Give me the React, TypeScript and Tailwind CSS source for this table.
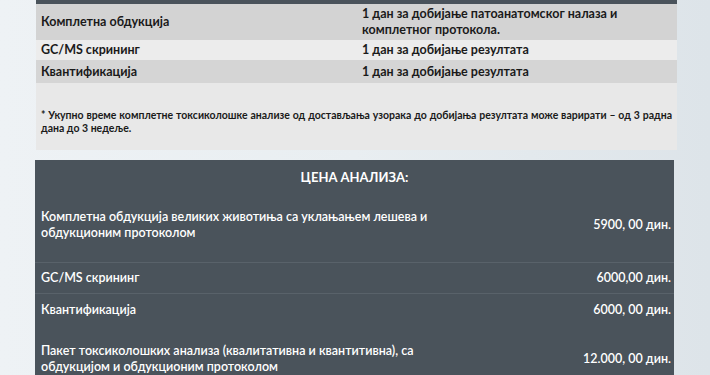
const timeRows = [
  {
    name: 'Комплетна обдукција',
    time: ['1 дан за добијање патоанатомског налаза и', 'комплетног протокола.'],
    bg: 'bg-[#d3d3d3]',
    h: 'h-[36px]',
  },
  { name: 'GC/MS скрининг', time: ['1 дан за добијање резултата'], bg: 'bg-[#ececec]', h: 'h-[20px]' },
  { name: 'Квантификација', time: ['1 дан за добијање резултата'], bg: 'bg-[#d5d5d5]', h: 'h-[23px]' },
];

const prices = [
  {
    lines: ['Комплетна обдукција великих животиња са уклањањем лешева и', 'обдукционим протоколом'],
    price: '5900, 00 дин.',
    h: 'h-[66px] pb-[8px]',
  },
  { lines: ['GC/MS скрининг'], price: '6000,00 дин.', h: 'h-[31px]' },
  { lines: ['Квантификација'], price: '6000, 00 дин.', h: 'h-[32px]' },
  {
    lines: ['Пакет токсиколошких анализа (квалитативна и квантитивна), са', 'обдукцијом и обдукционим протоколом'],
    price: '12.000, 00 дин.',
    h: 'h-[68px]',
  },
];

export default function App() {
  return (
    <div className="h-[375px] w-[710px] overflow-hidden bg-gradient-to-r from-[#eef2f5] via-[#e9eef1] to-[#dde4e9] font-['Lato','Open_Sans',sans-serif]">
      <div className="ml-[36px] w-[641px]">
        <div className="h-[4px] bg-[#4a535b]" />
        {timeRows.map((r) => (
          <div key={r.name} className={`flex items-center ${r.bg} ${r.h} text-[12.5px] font-bold leading-[16px] text-[#1a1a1a]`}>
            <div className="w-[326px] pl-[5px]">{r.name}</div>
            <div className="flex-1">
              {r.time.map((t) => (
                <div key={t}>{t}</div>
              ))}
            </div>
          </div>
        ))}
        <div className="h-[67px] bg-[#e8e8e8] px-[5px] pt-[26px] text-[10.5px] font-bold leading-[13px] text-[#1a1a1a]">
          <p className="text-justify [text-align-last:justify]">
            * Укупно време комплетне токсиколошке анализе од достављања узорака до добијања резултата може варирати – од 3 радна
          </p>
          <p>дана до 3 недеље.</p>
        </div>
      </div>

      <div className="ml-[35px] mt-[10px] w-[639px] bg-[#4a535b] text-white">
        <div className="flex h-[36px] items-center justify-center text-[13px] font-bold">ЦЕНА АНАЛИЗА:</div>
        {prices.map((p, i) => (
          <div
            key={p.price}
            className={`flex items-center justify-between ${p.h} pl-[6px] pr-[3px] text-[12.5px] font-semibold leading-[16px] ${i === 1 || i === 2 ? 'border-t border-[#59626a]' : ''}`}
          >
            <div>
              {p.lines.map((l) => (
                <div key={l}>{l}</div>
              ))}
            </div>
            <div>{p.price}</div>
          </div>
        ))}
      </div>
    </div>
  );
}
